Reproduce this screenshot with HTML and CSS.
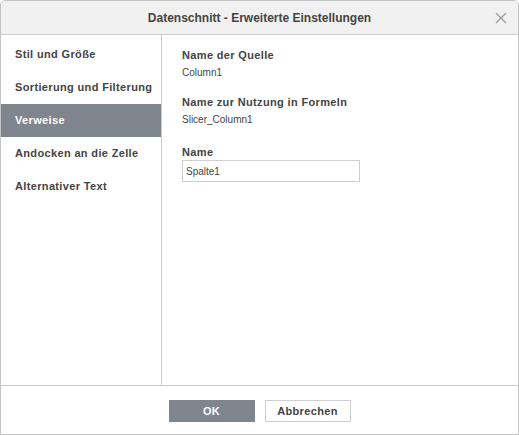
FILE: index.html
```html
<!DOCTYPE html>
<html>
<head>
<meta charset="utf-8">
<link rel="stylesheet" href="styles.css">
</head>
<body>
<div class="dialog">
  <div class="header">
    <span class="title">Datenschnitt - Erweiterte Einstellungen</span>
    <svg class="close" width="12" height="12" viewBox="0 0 12 12"><path d="M1 1L11 11M11 1L1 11" stroke="#9a9a9a" stroke-width="1.3" fill="none"/></svg>
  </div>
  <div class="main">
    <ul class="nav">
      <li>Stil und Größe</li>
      <li>Sortierung und Filterung</li>
      <li class="active">Verweise</li>
      <li>Andocken an die Zelle</li>
      <li>Alternativer Text</li>
    </ul>
    <div class="content">
      <div class="group">
        <div class="label">Name der Quelle</div>
        <div class="value">Column1</div>
      </div>
      <div class="group">
        <div class="label">Name zur Nutzung in Formeln</div>
        <div class="value">Slicer_Column1</div>
      </div>
      <div class="group last">
        <div class="label">Name</div>
        <input class="input" type="text" value="Spalte1">
      </div>
    </div>
  </div>
  <div class="footer">
    <button class="btn primary">OK</button>
    <button class="btn">Abbrechen</button>
  </div>
</div>
</body>
</html>
```
FILE: styles.css
```css
* { box-sizing: border-box; }
html, body { margin: 0; padding: 0; background: #fff; }
body {
  font-family: "Liberation Sans", Arial, sans-serif;
  font-size: 11px;
  color: #444;
}
.dialog {
  width: 519px;
  height: 435px;
  border: 1px solid #c4c4c4;
  border-radius: 5px 5px 0 0;
  display: flex;
  flex-direction: column;
  overflow: hidden;
}
.header {
  height: 34px;
  flex: none;
  background: #f1f1f1;
  border-bottom: 1px solid #cbcbcb;
  display: flex;
  align-items: center;
  justify-content: center;
  position: relative;
}
.title {
  font-weight: bold;
  font-size: 12px;
  color: #444;
  margin-top: 1px;
}
.close {
  position: absolute;
  right: 11px;
  top: 11px;
}
.main {
  flex: 1;
  display: flex;
  min-height: 0;
}
.nav {
  list-style: none;
  margin: 0;
  padding: 3px 0 0;
  width: 161px;
  flex: none;
  border-right: 1px solid #cbcbcb;
}
.nav li {
  height: 33px;
  line-height: 33px;
  padding-left: 14px;
  font-weight: bold;
  letter-spacing: 0.35px;
  color: #444;
}
.nav li.active {
  background: #7e858c;
  color: #fff;
}
.content {
  flex: 1;
  padding: 13px 0 0 20px;
}
.group { margin-bottom: 15px; }
.group.last { margin-top: 18px; }
.label {
  font-weight: bold;
  letter-spacing: 0.35px;
  height: 15px;
  line-height: 15px;
  margin-bottom: 3px;
}
.group.last .label { margin-bottom: 0; }
.value {
  height: 14px;
  line-height: 14px;
  font-size: 10px;
  color: #444;
}
.input {
  display: block;
  width: 178px;
  height: 22px;
  border: 1px solid #cfcfcf;
  padding: 0 3px;
  font-family: "Liberation Sans", Arial, sans-serif;
  font-size: 10px;
  color: #444;
  outline: none;
}
.footer {
  height: 49px;
  flex: none;
  border-top: 1px solid #cbcbcb;
  display: flex;
  justify-content: center;
  align-items: flex-start;
  padding-top: 14px;
  gap: 10px;
}
.btn {
  width: 86px;
  height: 22px;
  border: 1px solid #cfcfcf;
  background: #fff;
  font-family: "Liberation Sans", Arial, sans-serif;
  font-size: 11px;
  font-weight: bold;
  letter-spacing: 0.35px;
  color: #444;
  padding: 0;
}
.btn.primary {
  background: #7e858c;
  border-color: #7e858c;
  color: #fff;
}
```
